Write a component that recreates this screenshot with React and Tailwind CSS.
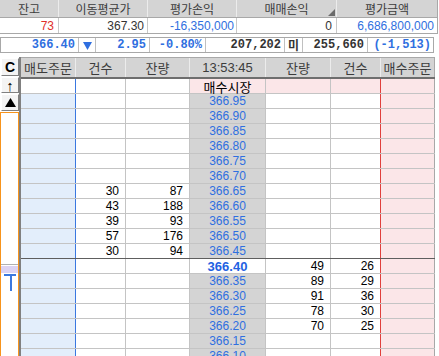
import React from "react";

const SANS = "font-['Liberation_Sans','Noto_Sans_CJK_KR',sans-serif]";
const KR = "font-['Noto_Sans_CJK_KR','Liberation_Sans',sans-serif]";
const MONO = "font-['Liberation_Mono','Noto_Sans_CJK_KR',monospace]";

const rows = [
  { price: "매수시장", market: true },
  { price: "366.95" },
  { price: "366.90" },
  { price: "366.85" },
  { price: "366.80" },
  { price: "366.75" },
  { price: "366.70" },
  { price: "366.65", ac: "30", aq: "87" },
  { price: "366.60", ac: "43", aq: "188" },
  { price: "366.55", ac: "39", aq: "93" },
  { price: "366.50", ac: "57", aq: "176" },
  { price: "366.45", ac: "30", aq: "94", divider: true },
  { price: "366.40", bq: "49", bc: "26", current: true },
  { price: "366.35", bq: "89", bc: "29" },
  { price: "366.30", bq: "91", bc: "36" },
  { price: "366.25", bq: "78", bc: "30" },
  { price: "366.20", bq: "70", bc: "25" },
  { price: "366.15" },
  { price: "366.10" },
];

function TopTable() {
  const h = "h-full border-r flex items-center justify-center leading-[17px]";
  return (
    <div className="w-[438px]">
      <div className={`flex h-[18px] bg-[#d4d4d4] border-b border-[#a8a8a8] text-[12px] text-[#3c3c3c] ${KR}`}>
        <div className={`w-[59px] border-[#ececec] ${h}`}>잔고</div>
        <div className={`w-[89px] border-[#ececec] ${h}`}>이동평균가</div>
        <div className={`w-[89px] border-[#ececec] ${h}`}>평가손익</div>
        <div className={`relative w-[100px] border-[#ececec] ${h}`}>
          매매손익
          <svg className="absolute right-[1px] bottom-[1px]" width="7" height="7" viewBox="0 0 7 7">
            <polygon points="7,0 7,7 0,7" fill="#6a6a6a" />
          </svg>
        </div>
        <div className={`w-[101px] border-[#a8a8a8] ${h}`}>평가금액</div>
      </div>
      <div className={`flex h-[16px] bg-white border-b border-[#a8a8a8] text-[12px] leading-none ${SANS}`}>
        <div className="w-[59px] border-r border-[#c8c8c8] flex items-center justify-end pr-[4px] text-[#e0302a]">73</div>
        <div className="w-[89px] border-r border-[#c8c8c8] flex items-center justify-end pr-[3px] text-[#333]">367.30</div>
        <div className="w-[89px] border-r border-[#c8c8c8] flex items-center justify-end pr-[2px] text-[#2f6fe0]">-16,350,000</div>
        <div className="w-[100px] border-r border-[#c8c8c8] flex items-center justify-end pr-[4px] text-[#333]">0</div>
        <div className="w-[101px] border-r border-[#a8a8a8] flex items-center justify-end pr-[3px] text-[#2f6fe0]">6,686,800,000</div>
      </div>
    </div>
  );
}

function PriceBox() {
  const c = "border-r border-[#c0c0c0] flex items-center justify-end pr-[3px]";
  return (
    <div className={`mt-[3px] w-[434px] h-[16px] flex border border-[#a8a8a8] bg-white text-[12px] font-bold leading-none ${MONO}`}>
      <div className={`w-[78px] ${c} text-[#2f6fe0]`}>366.40</div>
      <div className="w-[17px] border-r border-[#c0c0c0] flex items-center justify-center">
        <svg width="9" height="9" viewBox="0 0 9 9">
          <polygon points="0,1 9,1 4.5,9" fill="#2f6fe0" />
        </svg>
      </div>
      <div className={`w-[54px] ${c} text-[#2f6fe0]`}>2.95</div>
      <div className={`w-[56px] ${c} text-[#2f6fe0]`}>-0.80%</div>
      <div className={`w-[79px] ${c} text-[#333]`}>207,202</div>
      <div className={`w-[18px] border-r border-[#c0c0c0] flex items-center justify-center text-[#333] ${KR}`}>미</div>
      <div className={`w-[65px] ${c} text-[#333]`}>255,660</div>
      <div className="w-[65px] flex items-center justify-end pr-[2px] text-[#2f6fe0]">(-1,513)</div>
    </div>
  );
}

function LeftPanel() {
  const btn =
    "ml-[1px] w-[18px] flex items-center justify-center bg-[#f4f4f4] border-t border-l border-white border-r border-b border-r-[#808080] border-b-[#808080] text-black leading-none";
  return (
    <div className="w-[19px] flex flex-col shrink-0">
      <div className={`${btn} mt-[1px] h-[18px] text-[14px] font-bold ${SANS}`}>C</div>
      <div className={`${btn} mt-[1px] h-[16px] text-[15px] ${SANS}`}>↑</div>
      <div className={`${btn} mt-[1px] h-[17px]`}>
        <svg width="11" height="9" viewBox="0 0 11 9">
          <polygon points="5.5,0 11,9 0,9" fill="#000" />
        </svg>
      </div>
      <div className="mt-[1px] flex-1 border-t border-l border-r border-[#f7941d] flex flex-col">
        <div className="h-[151px]" />
        <div className="h-[1px] bg-[#b0b0b0]" />
        <div className="h-[1px]" />
        <div className="h-[7px] bg-[#dcd3f3]" />
        <svg width="17" height="19" viewBox="0 0 17 19">
          <rect x="3" y="1" width="12" height="2" fill="#3a78e0" />
          <rect x="9" y="1" width="2" height="17" fill="#3a78e0" />
        </svg>
      </div>
    </div>
  );
}

function Header() {
  const h = "h-full border-r border-[#ececec] flex items-center justify-center leading-[18px]";
  return (
    <div className={`flex h-[22px] bg-[#d4d4d4] border-t border-[#a8a8a8] border-b-2 border-b-[#6e6e6e] text-[13px] text-[#3c3c3c] ${KR}`}>
      <div className={`w-[55px] ${h}`}>매도주문</div>
      <div className={`w-[50px] ${h}`}>건수</div>
      <div className={`w-[64px] ${h}`}>잔량</div>
      <div className={`w-[76px] ${h} ${SANS}`}>13:53:45</div>
      <div className={`w-[65px] ${h}`}>잔량</div>
      <div className={`w-[50px] ${h}`}>건수</div>
      <div className="w-[54px] h-full border-r border-[#a8a8a8] flex items-center justify-center leading-[18px]">매수주문</div>
    </div>
  );
}

function Row({ r, first }) {
  const num = "h-full flex items-center justify-end pr-[6px] text-black";
  const rowBorder = r.divider ? "border-b-[#5e5e5e]" : "border-b-[#c4c4c4]";
  let priceCls = "bg-[#d4d4d4] text-[#2f6fe0]";
  if (r.market) priceCls = `bg-[#fbe6e8] text-black text-[13px] ${KR}`;
  if (r.current) priceCls = "bg-white text-[#1f62e2] font-bold text-[13px]";
  const rightBg = r.market ? "bg-[#fbe6e8]" : "bg-white";
  return (
    <div className={`flex h-[15px] border-b ${rowBorder} text-[12px] leading-none ${SANS}`}>
      <div className={`w-[55px] h-full border-r border-r-[#3a78e0] ${first ? "bg-white" : "bg-[#e3eefb]"}`} />
      <div className={`w-[50px] border-r border-[#c4c4c4] bg-white ${num}`}>{r.ac}</div>
      <div className={`w-[64px] border-r border-[#c4c4c4] bg-white ${num}`}>{r.aq}</div>
      <div className={`w-[76px] h-full border-r border-[#c4c4c4] flex items-center justify-center ${priceCls}`}>{r.price}</div>
      <div className={`w-[65px] border-r border-[#c4c4c4] ${rightBg} ${num}`}>{r.bq}</div>
      <div className={`w-[50px] border-r border-r-[#e0403c] ${rightBg} ${num}`}>{r.bc}</div>
      <div className="w-[54px] h-full border-r border-[#a8a8a8] bg-[#fbe6e8]" />
    </div>
  );
}

export default function App() {
  return (
    <div className={`w-[439px] h-[356px] overflow-hidden bg-white ${SANS}`}>
      <TopTable />
      <PriceBox />
      <div className="mt-[4px] flex">
        <LeftPanel />
        <div className="border-l-2 border-[#808080] w-[416px]">
          <Header />
          {rows.map((r, i) => (
            <Row key={i} r={r} first={i === 0} />
          ))}
        </div>
      </div>
    </div>
  );
}
